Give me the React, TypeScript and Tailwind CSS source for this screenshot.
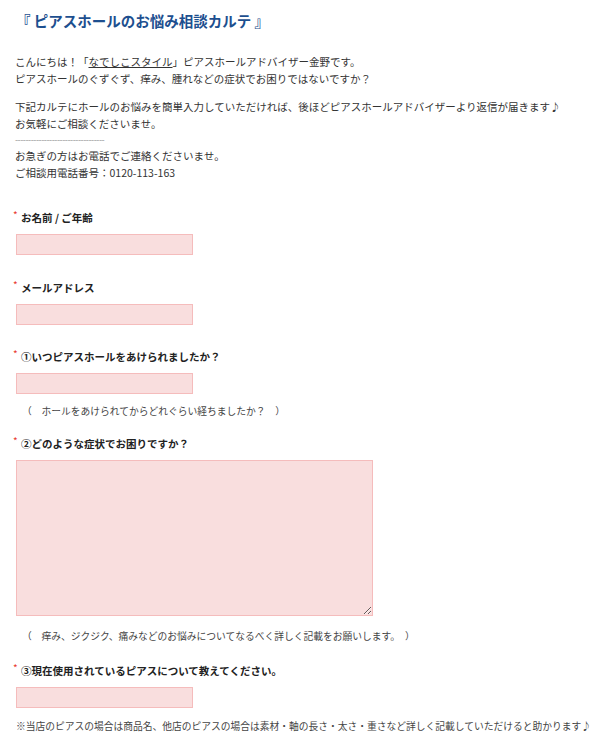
const font = "font-['Hiragino_Kaku_Gothic_ProN','Noto_Sans_CJK_JP',sans-serif]"

const Label = ({ text }: { text: string }) => (
  <div className="flex items-start h-[14px] leading-[14px]">
    <span className="text-[#e8392f] text-[10px] leading-[10px] w-[8px] ml-[13px] -mt-[1px]">*</span>
    <span className="text-[10.5px] font-bold text-[#222]">{text}</span>
  </div>
)

const Input = () => (
  <input
    type="text"
    className="block w-[177px] h-[21px] bg-[#f9dede] border border-[#f5bcbc] outline-none ml-[16px]"
  />
)

const Hint = ({ text }: { text: string }) => (
  <p className="text-[9.75px] text-[#444] ml-[22px] leading-[14px]">{text}</p>
)

export default function App() {
  return (
    <div className={`${font} w-[600px] h-[744px] bg-white overflow-hidden`}>
      {/* header */}
      <h1 className="pt-[12px] pl-[16px] text-[14.5px] font-bold text-[#1d4f8f] leading-[18px]">
        『 ピアスホールのお悩み相談カルテ 』
      </h1>

      {/* intro */}
      <div className="mt-[23px] pl-[15px] text-[10.5px] text-[#333] leading-[17px]">
        <p>
          こんにちは！「<span className="underline">なでしこスタイル</span>」ピアスホールアドバイザー金野です。
        </p>
        <p>ピアスホールのぐずぐず、痒み、腫れなどの症状でお困りではないですか？</p>
        <p className="mt-[11px]">下記カルテにホールのお悩みを簡単入力していただければ、後ほどピアスホールアドバイザーより返信が届きます♪</p>
        <p>お気軽にご相談くださいませ。</p>
        <p className="leading-[15px] text-[#999] text-[9px] tracking-[-0.5px]">----------------------------------</p>
        <p>お急ぎの方はお電話でご連絡くださいませ。</p>
        <p>ご相談用電話番号：0120-113-163</p>
      </div>

      {/* form */}
      <form className="mt-[30px]">
        <Label text="お名前 / ご年齢" />
        <div className="mt-[9px]"><Input /></div>

        <div className="mt-[26px]"><Label text="メールアドレス" /></div>
        <div className="mt-[9px]"><Input /></div>

        <div className="mt-[25px]"><Label text="①いつピアスホールをあけられましたか？" /></div>
        <div className="mt-[9px]"><Input /></div>
        <div className="mt-[10px]"><Hint text="（　ホールをあけられてからどれぐらい経ちましたか？　）" /></div>

        <div className="mt-[19px]"><Label text="②どのような症状でお困りですか？" /></div>
        <textarea className="block mt-[9px] ml-[16px] w-[357px] h-[156px] bg-[#f9dede] border border-[#f5bcbc] outline-none" />
        <div className="mt-[13px]"><Hint text="（　痒み、ジクジク、痛みなどのお悩みについてなるべく詳しく記載をお願いします。　）" /></div>

        <div className="mt-[21px]"><Label text="③現在使用されているピアスについて教えてください。" /></div>
        <div className="mt-[9px]"><Input /></div>
        <p className="mt-[11px] ml-[16px] text-[9.75px] text-[#444] leading-[14px]">
          ※当店のピアスの場合は商品名、他店のピアスの場合は素材・軸の長さ・太さ・重さなど詳しく記載していただけると助かります♪
        </p>
      </form>
    </div>
  )
}
